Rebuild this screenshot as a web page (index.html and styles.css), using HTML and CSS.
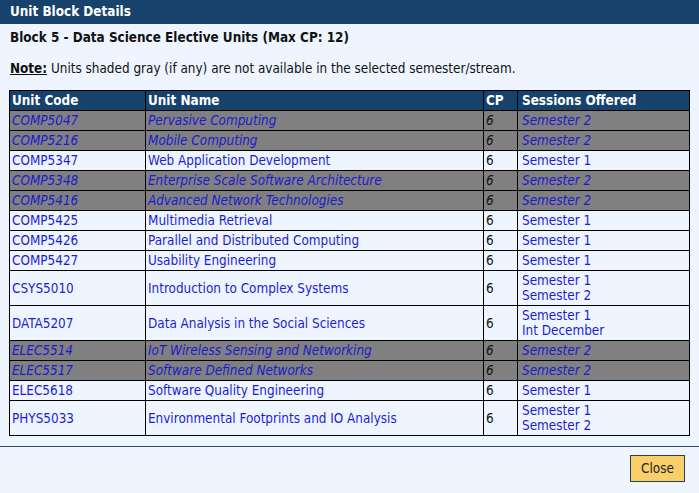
FILE: index.html
```html
<!DOCTYPE html>
<html>
<head>
<meta charset="utf-8">
<link rel="stylesheet" href="styles.css">
</head>
<body>
<div class="dialog">
  <div class="titlebar">Unit Block Details</div>
  <div class="content">
    <div class="block-title">Block 5 - Data Science Elective Units (Max CP: 12)</div>
    <div class="note"><span class="note-label">Note:</span> Units shaded gray (if any) are not available in the selected semester/stream.</div>
    <table class="units">
      <thead>
        <tr><th class="c-code">Unit Code</th><th class="c-name">Unit Name</th><th class="c-cp">CP</th><th class="c-sess">Sessions Offered</th></tr>
      </thead>
      <tbody>
        <tr class="na"><td class="lnk">COMP5047</td><td class="lnk">Pervasive Computing</td><td>6</td><td class="lnk sess">Semester 2</td></tr>
        <tr class="na"><td class="lnk">COMP5216</td><td class="lnk">Mobile Computing</td><td>6</td><td class="lnk sess">Semester 2</td></tr>
        <tr><td class="lnk">COMP5347</td><td class="lnk">Web Application Development</td><td>6</td><td class="lnk sess">Semester 1</td></tr>
        <tr class="na"><td class="lnk">COMP5348</td><td class="lnk">Enterprise Scale Software Architecture</td><td>6</td><td class="lnk sess">Semester 2</td></tr>
        <tr class="na"><td class="lnk">COMP5416</td><td class="lnk">Advanced Network Technologies</td><td>6</td><td class="lnk sess">Semester 2</td></tr>
        <tr><td class="lnk">COMP5425</td><td class="lnk">Multimedia Retrieval</td><td>6</td><td class="lnk sess">Semester 1</td></tr>
        <tr><td class="lnk">COMP5426</td><td class="lnk">Parallel and Distributed Computing</td><td>6</td><td class="lnk sess">Semester 1</td></tr>
        <tr><td class="lnk">COMP5427</td><td class="lnk">Usability Engineering</td><td>6</td><td class="lnk sess">Semester 1</td></tr>
        <tr><td class="lnk">CSYS5010</td><td class="lnk">Introduction to Complex Systems</td><td>6</td><td class="lnk sess">Semester 1<br>Semester 2</td></tr>
        <tr><td class="lnk">DATA5207</td><td class="lnk">Data Analysis in the Social Sciences</td><td>6</td><td class="lnk sess">Semester 1<br>Int December</td></tr>
        <tr class="na"><td class="lnk">ELEC5514</td><td class="lnk">IoT Wireless Sensing and Networking</td><td>6</td><td class="lnk sess">Semester 2</td></tr>
        <tr class="na"><td class="lnk">ELEC5517</td><td class="lnk">Software Defined Networks</td><td>6</td><td class="lnk sess">Semester 2</td></tr>
        <tr><td class="lnk">ELEC5618</td><td class="lnk">Software Quality Engineering</td><td>6</td><td class="lnk sess">Semester 1</td></tr>
        <tr><td class="lnk">PHYS5033</td><td class="lnk">Environmental Footprints and IO Analysis</td><td>6</td><td class="lnk sess">Semester 1<br>Semester 2</td></tr>
      </tbody>
    </table>
  </div>
  <div class="footer">
    <button class="btn-close">Close</button>
  </div>
</div>
</body>
</html>
```
FILE: styles.css
```css
html, body {
  margin: 0;
  padding: 0;
  background: #eef5ff;
}
body {
  font-family: "DejaVu Sans Condensed", "DejaVu Sans", sans-serif;
  font-size: 13.4px;
  color: #111;
  width: 699px;
  height: 493px;
  overflow: hidden;
}
.dialog {
  display: flex;
  flex-direction: column;
  height: 493px;
}
.titlebar {
  background: #17426b;
  color: #fff;
  font-weight: bold;
  height: 24px;
  line-height: 24px;
  padding-left: 10px;
  box-sizing: border-box;
}
.content {
  padding: 6px 9px 0 9px;
  height: 422px;
  box-sizing: border-box;
}
.block-title {
  font-weight: bold;
  padding-left: 1px;
  line-height: 16px;
}
.note {
  margin-top: 15px;
  padding-left: 1px;
  line-height: 16px;
}
.note-label {
  font-weight: bold;
  text-decoration: underline;
}
.units {
  margin-top: 13px;
  border-collapse: collapse;
  width: 681px;
  border: 1px solid #000;
}
.units th, .units td {
  border: 1px solid #000;
  padding: 2px 2px;
  line-height: 15px;
  text-align: left;
  vertical-align: middle;
  white-space: nowrap;
}
.units th {
  background: #17426b;
  color: #fff;
  font-weight: bold;
}
.units th.c-sess, .units td.sess { padding-left: 4px; }
.c-code { width: 131px; }
.c-name { width: 333px; }
.c-cp { width: 29px; }
.units td.lnk { color: #1c1cd8; }
.units tr.na td {
  background: #808080;
  font-style: italic;
}
.units tr.na td.lnk { color: #1a1ad0; }
.footer {
  border-top: 1px solid #2a4d6e;
  display: flex;
  justify-content: flex-end;
  padding: 8px 14px 0 0;
  flex: 1;
}
.btn-close {
  font-family: "DejaVu Sans Condensed", "DejaVu Sans", sans-serif;
  font-size: 13.4px;
  color: #222;
  background: #f9cf6a;
  border: 1px solid #2d3f4f;
  width: 55px;
  height: 27px;
  padding: 0;
  align-self: flex-start;
}
```
